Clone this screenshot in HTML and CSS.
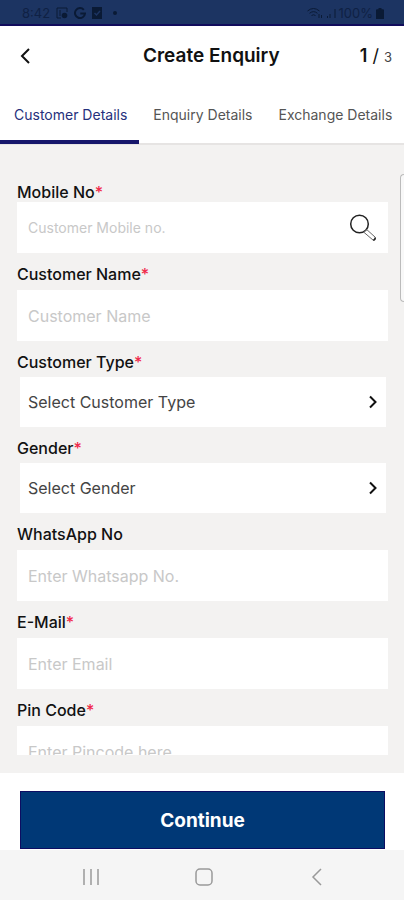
FILE: index.html
```html
<!DOCTYPE html>
<html lang="en">
<head>
<meta charset="utf-8">
<meta name="viewport" content="width=device-width, initial-scale=1">
<title>Create Enquiry</title>
<link rel="stylesheet" href="styles.css">
</head>
<body>
<div class="status">
  <div class="status-group">
    <span class="status-time">8:42</span>
    <svg width="12" height="12" viewBox="0 0 12 12" fill="none" stroke="currentColor"><path d="M5 11H1V1h10v4M4 3v6"/><circle cx="8.500" cy="8.500" r="2.800" fill="currentColor" stroke="none"/></svg>
    <svg width="12" height="12" viewBox="0 0 12 12" fill="none" stroke="currentColor" stroke-width="2"><path d="M9.800 2.800A5 5 0 1 0 11 6.500H6.300"/></svg>
    <svg width="10" height="12" viewBox="0 0 10 12"><path d="M0 0h10v12H0z" fill="currentColor"/><path d="M2.500 6l2 2 3.500-4" fill="none" stroke="#1c3462" stroke-width="1.500"/></svg>
    <svg class="status-dot" width="12" height="4" viewBox="0 0 12 4"><circle cx="7" cy="2" r="2" fill="currentColor"/></svg>
  </div>
  <div class="status-group status-right">
    <svg width="16" height="12" viewBox="0 0 16 12" fill="none" stroke="currentColor"><path d="M0.500 4Q6.500-1 12.500 4M2.500 6.300Q6.500 3 10.500 6.300M4.500 8.500Q6.500 7 8.500 8.500M12 7v4M14.500 8v3"/></svg>
    <svg width="10" height="12" viewBox="0 0 10 12" fill="none" stroke="currentColor"><path d="M1.500 11V9M4 11V7M9 11V2"/></svg>
    <span class="status-battery">100%</span>
    <svg width="8" height="11" viewBox="0 0 8 11" fill="currentColor"><path d="M2.500 0h3v1.200H7q1 0 1 1V11H0V2.200q0-1 1-1h1.500z"/></svg>
  </div>
</div>

<header class="header">
  <button class="back" type="button" aria-label="Back">
    <svg width="10" height="16" viewBox="0 0 10 16" fill="none" stroke="currentColor" stroke-width="2"><path d="M9 1L2 8l7 7"/></svg>
  </button>
  <h1 class="title">Create Enquiry</h1>
  <p class="step"><strong>1</strong> / <small>3</small></p>
</header>

<nav class="tabs">
  <a class="tab tab-active" href="#customer">Customer Details</a>
  <a class="tab" href="#enquiry">Enquiry Details</a>
  <a class="tab" href="#exchange">Exchange Details</a>
</nav>

<main class="main">
  <form class="form" id="customer">
    <div class="field">
      <label class="label label-tight" for="mobile">Mobile No<span class="req">*</span></label>
      <div class="box">
        <input class="input input-small" id="mobile" type="tel" placeholder="Customer Mobile no.">
        <button class="search" type="button" aria-label="Search">
          <svg width="28" height="28" viewBox="0 0 28 28" fill="none" stroke="#222"><circle cx="10.500" cy="10" r="8.800" stroke-width="1.500"/><path d="M14.800 18.200l3-2.600 8.400 7.600q.8 2.200-1.800 3.200z" stroke="#666"/><path d="M24.300 26.300q2.200-.8 1.800-2.700" stroke-width="1.500"/></svg>
        </button>
      </div>
    </div>
    <div class="field">
      <label class="label" for="name">Customer Name<span class="req">*</span></label>
      <div class="box"><input class="input" id="name" type="text" placeholder="Customer Name"></div>
    </div>
    <div class="field">
      <label class="label label-select" for="type">Customer Type<span class="req">*</span></label>
      <div class="box box-select">
        <select class="select" id="type"><option>Select Customer Type</option></select>
        <svg class="chevron" width="8" height="14" viewBox="0 0 8 14" fill="none" stroke="currentColor" stroke-width="2"><path d="M1 1.500L6.500 7 1 12.500"/></svg>
      </div>
    </div>
    <div class="field">
      <label class="label label-select" for="gender">Gender<span class="req">*</span></label>
      <div class="box box-select">
        <select class="select" id="gender"><option>Select Gender</option></select>
        <svg class="chevron" width="8" height="14" viewBox="0 0 8 14" fill="none" stroke="currentColor" stroke-width="2"><path d="M1 1.500L6.500 7 1 12.500"/></svg>
      </div>
    </div>
    <div class="field">
      <label class="label" for="whatsapp">WhatsApp No</label>
      <div class="box"><input class="input" id="whatsapp" type="tel" placeholder="Enter Whatsapp No."></div>
    </div>
    <div class="field">
      <label class="label" for="email">E-Mail<span class="req">*</span></label>
      <div class="box"><input class="input" id="email" type="email" placeholder="Enter Email"></div>
    </div>
    <div class="field">
      <label class="label" for="pin">Pin Code<span class="req">*</span></label>
      <div class="box"><input class="input" id="pin" type="text" placeholder="Enter Pincode here"></div>
    </div>
  </form>
  <div class="edge-handle"></div>
</main>

<footer class="footer">
  <button class="continue" type="button">Continue</button>
</footer>

<div class="sysnav">
  <button class="sysbtn" type="button" aria-label="Recent apps"><svg width="18" height="18" viewBox="0 0 18 18" fill="none" stroke="currentColor" stroke-width="1.500"><path d="M2 1v16M9 1v16M16 1v16"/></svg></button>
  <button class="sysbtn" type="button" aria-label="Home"><svg width="18" height="18" viewBox="0 0 18 18" fill="none" stroke="currentColor" stroke-width="1.500"><rect x="1" y="1" width="16" height="16" rx="4"/></svg></button>
  <button class="sysbtn" type="button" aria-label="Back"><svg width="18" height="18" viewBox="0 0 18 18" fill="none" stroke="currentColor" stroke-width="1.500"><path d="M13 1L5 9l8 8"/></svg></button>
</div>
</body>
</html>
```
FILE: styles.css
```css
* {
  box-sizing: border-box;
}

body {
  margin: 0;
  height: 100vh;
  display: flex;
  flex-direction: column;
  background: #fff;
  color: #111;
  font-family: Inter, "Liberation Sans", sans-serif;
  font-size: 16px;
}

button,
input,
select {
  font: inherit;
  color: inherit;
  margin: 0;
  padding: 0;
  border: 0;
  border-radius: 0;
  background: none;
}

.status {
  flex: none;
  height: 26px;
  display: flex;
  justify-content: space-between;
  padding: 0 20px 0 22px;
  background: #1c3462;
  border-bottom: 2px solid #110c5c;
  color: #0a1a35;
}

.status-group {
  display: flex;
  align-items: center;
  gap: 6px;
  padding-top: 2px;
}

.status-right {
  gap: 3px;
}

.status-time {
  font-size: 13px;
  color: #0f2144;
}

.status-battery {
  font-size: 13px;
  color: #0f2144;
}

.header {
  flex: none;
  height: 59px;
  display: grid;
  grid-template-columns: 123px 1fr auto;
  align-items: center;
  padding: 0 12px 0 20px;
}

.back {
  display: flex;
  justify-self: start;
}

.title {
  margin: 0;
  font-size: 19px;
  font-weight: 600;
}

.step {
  margin: 0;
  font-size: 18px;
}

.step strong {
  font-weight: 600;
}

.step small {
  font-size: 13px;
  color: #444;
}

.tabs {
  flex: none;
  height: 60px;
  display: flex;
  border-bottom: 2px solid #e6e4e3;
}

.tab {
  flex: none;
  height: 59px;
  padding: 0 12px 0 14px;
  border-bottom: 4px solid transparent;
  line-height: 59px;
  font-size: 14px;
  color: #555;
  text-decoration: none;
  white-space: nowrap;
}

.tab-active {
  border-color: #16166b;
  color: #25307c;
}

.main {
  position: relative;
  flex: 1;
  min-height: 0;
  display: flex;
  padding-bottom: 18px;
  background: #f3f2f1;
}

.form {
  flex: 1;
  display: flex;
  flex-direction: column;
  gap: 11px;
  padding: 37px 16px 0 17px;
  overflow-y: auto;
  scrollbar-width: none;
}

.field {
  flex: none;
}

.label {
  display: block;
  margin-bottom: 6px;
  line-height: 20px;
  font-weight: 500;
}

.label-tight {
  margin-bottom: 0;
}

.label-select {
  margin-bottom: 5px;
}

.req {
  color: #f0284a;
}

.box {
  height: 51px;
  display: flex;
  align-items: center;
  padding: 0 11px;
  background: #fff;
}

.box-select {
  height: 50px;
  margin: 0 2px 0 3px;
  padding: 0 9px 0 8px;
}

.input {
  flex: 1;
  min-width: 0;
  height: 100%;
}

.input-small {
  font-size: 14px;
}

.input::placeholder {
  color: #c8c8c8;
  opacity: 1;
}

.search {
  display: flex;
}

.select {
  flex: 1;
  min-width: 0;
  height: 100%;
  appearance: none;
  color: #444;
}

.chevron {
  flex: none;
}

.edge-handle {
  position: absolute;
  top: 29px;
  right: 0;
  width: 4px;
  height: 128px;
  border: 1px solid #bbb;
  border-right: 0;
  border-radius: 4px 0 0 4px;
  background: #f8f8f8;
}

.footer {
  flex: none;
  padding: 18px 19px 1px 20px;
}

.continue {
  width: 100%;
  height: 58px;
  border: 1px solid #0d0d62;
  background: #003876;
  color: #fff;
  font-size: 19px;
  font-weight: 700;
}

.sysnav {
  flex: none;
  height: 50px;
  display: flex;
  justify-content: center;
  gap: 95px;
  padding: 3px 0 0 4px;
  background: #f5f5f5;
  color: #999;
}

.sysbtn {
  display: flex;
  align-items: center;
}
```
